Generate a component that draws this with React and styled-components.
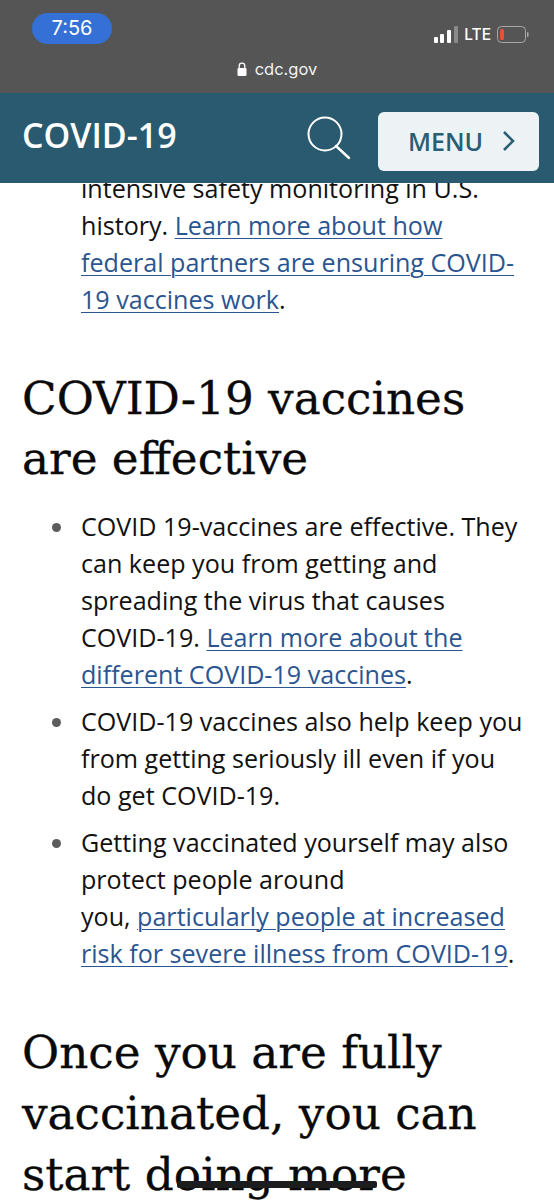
import React from "react";
import styled, { createGlobalStyle } from "styled-components";

const GlobalStyle = createGlobalStyle`
  html, body {
    margin: 0;
    padding: 0;
    background: #fff;
  }
`;

const Page = styled.div`
  width: 554px;
  height: 1200px;
  overflow: hidden;
  display: flex;
  flex-direction: column;
  font-family: "Open Sans", "Liberation Sans", sans-serif;
  color: #111;
`;

const Chrome = styled.div`
  height: 93px;
  flex: none;
  background: #555555;
  color: #fff;
  display: flex;
  flex-direction: column;
  font-family: "Inter", "Liberation Sans", sans-serif;
`;

const StatusRow = styled.div`
  display: flex;
  align-items: center;
  justify-content: space-between;
  padding: 13px 25px 0 32px;
`;

const TimePill = styled.div`
  width: 80px;
  height: 31px;
  border-radius: 16px;
  background: #3470d6;
  font-size: 20px;
  line-height: 31px;
  text-align: center;
`;

const Signals = styled.div`
  display: flex;
  align-items: center;
  gap: 6px;
  margin-top: 11px;
  font-size: 15.5px;
  font-weight: 500;
`;

const UrlRow = styled.div`
  display: flex;
  align-items: center;
  justify-content: center;
  gap: 8px;
  margin-top: 15px;
  font-size: 16.5px;
  color: #f2f2f2;
`;

const NavBar = styled.div`
  height: 90px;
  flex: none;
  box-sizing: border-box;
  background: #2a5a70;
  display: flex;
  align-items: center;
  padding: 6px 15px 0 22px;
`;

const NavTitle = styled.div`
  flex: 1;
  color: #fff;
  font-size: 34px;
  font-weight: 600;
  margin-top: -12px;
`;

const SearchIcon = styled.svg`
  width: 44px;
  height: 44px;
  margin: -6px 27px 0 0;
`;

const MenuButton = styled.div`
  width: 161px;
  height: 59px;
  box-sizing: border-box;
  padding-left: 6px;
  border-radius: 6px;
  background: #edf3f5;
  color: #2a5f73;
  display: flex;
  align-items: center;
  justify-content: center;
  gap: 19px;
  font-size: 25px;
  font-weight: 600;
`;

const Content = styled.main`
  flex: 1;
  min-height: 0;
  overflow: hidden;
  padding: 0 22px;
`;

const BulletList = styled.ul`
  margin: ${(props) => props.$top || "0"} 0 0;
  padding: 0 5px 0 59px;
  list-style: none;
`;

const Bullet = styled.li`
  position: relative;
  font-size: 25.1px;
  line-height: 37px;
  margin-bottom: 10px;
  ${(props) =>
    props.$dot &&
    `
    &::before {
      content: "";
      position: absolute;
      left: -29px;
      top: 15px;
      width: 9px;
      height: 9px;
      border-radius: 50%;
      background: #5c5c5c;
    }
  `}
`;

const TextLink = styled.a`
  color: #2a5591;
  text-decoration: underline;
  text-underline-offset: 3px;
  text-decoration-thickness: 1px;
`;

const Heading = styled.h2`
  margin: ${(props) => props.$top} 0 ${(props) => props.$bottom};
  font-family: "DejaVu Serif", "Liberation Serif", serif;
  font-size: 45.3px;
  line-height: ${(props) => props.$lineHeight};
  font-weight: 400;
  color: #0a0a0a;
  -webkit-text-stroke: 0.3px #0a0a0a;
`;

const Scribbled = styled.span`
  position: relative;
  &::after {
    content: "";
    position: absolute;
    left: 3px;
    right: 3px;
    top: 33px;
    height: 7px;
    background: #1d1d1d;
    border-radius: 2px;
  }
`;

const Nowrap = styled.span`
  white-space: nowrap;
`;

export default function App() {
  return (
    <>
      <GlobalStyle />
      <Page>
        <Chrome>
          <StatusRow>
            <TimePill>7:56</TimePill>
            <Signals>
              <svg width="24" height="17" viewBox="0 0 24 17" fill="#fff">
                <rect x="0" y="11" width="4" height="6" rx="1" />
                <rect x="6" y="8" width="4" height="9" rx="1" />
                <rect x="13" y="4" width="4" height="13" rx="1" />
                <rect x="20" y="0" width="4" height="17" rx="1" fill="#8a8a8a" />
              </svg>
              <span>LTE</span>
              <svg width="32" height="17" viewBox="0 0 32 17" fill="none">
                <rect x="0.5" y="0.5" width="28" height="16" rx="4" stroke="#a8a8a8" />
                <rect x="3" y="3" width="4" height="11" rx="1.5" fill="#e8503c" />
                <rect x="30" y="6" width="1.5" height="5" rx="0.7" fill="#a8a8a8" />
              </svg>
            </Signals>
          </StatusRow>
          <UrlRow>
            <svg width="10" height="14" viewBox="0 0 10 14">
              <path d="M2.2 6V4a2.8 2.8 0 0 1 5.6 0v2" fill="none" stroke="#fff" strokeWidth="1.3" />
              <rect x="0.5" y="6" width="9" height="8" rx="1.2" fill="#fff" />
            </svg>
            <span>cdc.gov</span>
          </UrlRow>
        </Chrome>
        <NavBar>
          <NavTitle>COVID-19</NavTitle>
          <SearchIcon viewBox="0 0 44 44" fill="none" stroke="#fff" strokeWidth="2">
            <circle cx="18" cy="18" r="16.5" />
            <path d="M29 30 L42 42" strokeLinecap="round" strokeWidth="2.4" />
          </SearchIcon>
          <MenuButton>
            <span>MENU</span>
            <svg width="13" height="22" viewBox="0 0 13 22" fill="none" stroke="#2a5f73" strokeWidth="2.6">
              <path d="M2 2 L11 11 L2 20" />
            </svg>
          </MenuButton>
        </NavBar>
        <Content>
          <BulletList $top="-13px">
            <Bullet>
              intensive safety monitoring in U.S. history.{" "}
              <TextLink>Learn more about how federal partners are ensuring COVID-19 vaccines work</TextLink>.
            </Bullet>
          </BulletList>
          <Heading $top="51px" $bottom="19px" $lineHeight="60px">
            COVID-19 vaccines are effective
          </Heading>
          <BulletList>
            <Bullet $dot>
              COVID 19-vaccines are effective. They can keep you from getting and spreading the virus that causes
              COVID-19. <TextLink>Learn more about the different COVID-19 vaccines</TextLink>.
            </Bullet>
            <Bullet $dot>
              COVID-19 vaccines also help keep you from getting seriously ill even if you do get COVID-19.
            </Bullet>
            <Bullet $dot>
              Getting vaccinated yourself may also protect people around
              <br />
              you, <TextLink>particularly people at increased risk for severe illness from COVID-19</TextLink>.
            </Bullet>
          </BulletList>
          <Heading $top="50px" $bottom="0" $lineHeight="61px">
            Once you are fully vaccinated, you can <Nowrap>start d<Scribbled>oing mor</Scribbled>e</Nowrap>
          </Heading>
        </Content>
      </Page>
    </>
  );
}
